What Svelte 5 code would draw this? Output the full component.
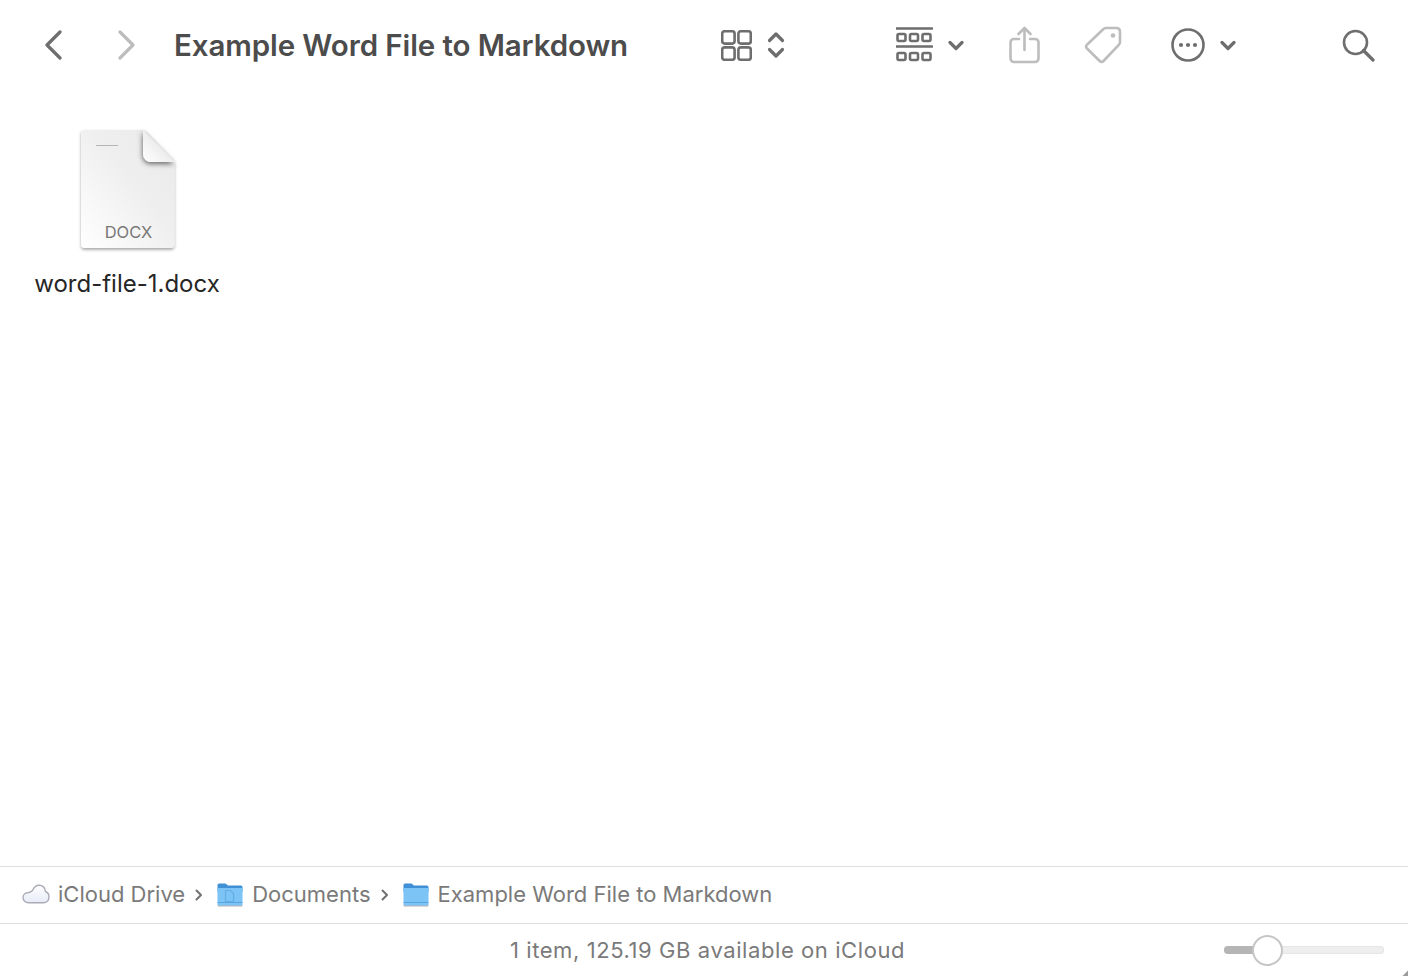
<script>
  const crumbs = [
    { label: 'iCloud Drive', kind: 'cloud' },
    { label: 'Documents', kind: 'docs' },
    { label: 'Example Word File to Markdown', kind: 'folder' }
  ];
</script>

<div class="window">
  <header class="toolbar">
    <svg class="back" width="18" height="30" viewBox="0 0 18 30"><path d="M16 2 3 15l13 13" class="ic" /></svg>
    <svg class="forward" width="18" height="30" viewBox="0 0 18 30"><path d="M2 2l13 13L2 28" class="ic dim" /></svg>
    <h1>Example Word File to Markdown</h1>
    <svg class="grid" width="31" height="31" viewBox="0 0 31 31">
      <rect x="1.2" y="1.2" width="12.4" height="12.4" rx="2.5" class="thin" />
      <rect x="17.4" y="1.2" width="12.4" height="12.4" rx="2.5" class="thin" />
      <rect x="1.2" y="17.4" width="12.4" height="12.4" rx="2.5" class="thin" />
      <rect x="17.4" y="17.4" width="12.4" height="12.4" rx="2.5" class="thin" />
    </svg>
    <svg class="updown" width="18" height="28" viewBox="0 0 18 28"><path d="M2.5 9.5 9 3l6.500 6.500M2.500 18.500 9 25l6.500-6.500" class="ic" /></svg>
    <svg class="gallery" width="37" height="36" viewBox="0 0 37 36">
      <path d="M0 1.500h36M0 19.500h36" class="thin" />
      <rect x="1.500" y="7" width="8" height="7" rx="1.500" class="thin" /><rect x="14" y="7" width="8" height="7" rx="1.500" class="thin" /><rect x="26.500" y="7" width="8" height="7" rx="1.500" class="thin" />
      <rect x="1.500" y="26" width="8" height="7" rx="1.500" class="thin" /><rect x="14" y="26" width="8" height="7" rx="1.500" class="thin" /><rect x="26.500" y="26" width="8" height="7" rx="1.500" class="thin" />
    </svg>
    <svg class="chev1" width="16" height="11" viewBox="0 0 16 11"><path d="M2 2.500 8 8.500l6-6" class="ic" /></svg>
    <svg class="share" width="31" height="38" viewBox="0 0 31 38">
      <path d="M10 13H5a3.500 3.500 0 0 0-3.500 3.500v16A3.500 3.500 0 0 0 5 36h21a3.500 3.500 0 0 0 3.500-3.500v-16A3.500 3.500 0 0 0 26 13h-5M15.500 24V2M9.500 8l6-6 6 6" class="thin dim" />
    </svg>
    <svg class="tag" width="39" height="40" viewBox="0 0 39 40">
      <path d="M22 3h10.500A3.500 3.500 0 0 1 36 6.500V17a4 4 0 0 1-1.200 2.800L19.500 36a2.700 2.700 0 0 1-3.800 0L3 23.500a2.700 2.700 0 0 1 0-3.800L19.200 4.200A4 4 0 0 1 22 3Z" class="thin dim" />
      <circle cx="29" cy="10.500" r="2.300" fill="#bdbdbd" />
    </svg>
    <svg class="more" width="34" height="34" viewBox="0 0 34 34">
      <circle cx="17" cy="17" r="15.500" class="thin" />
      <circle cx="10" cy="17" r="2.100" fill="#6e6e6e" /><circle cx="17" cy="17" r="2.100" fill="#6e6e6e" /><circle cx="24" cy="17" r="2.100" fill="#6e6e6e" />
    </svg>
    <svg class="chev2" width="16" height="11" viewBox="0 0 16 11"><path d="M2 2.500 8 8.500l6-6" class="ic" /></svg>
    <svg class="search" width="33" height="33" viewBox="0 0 33 33">
      <circle cx="13.500" cy="13.500" r="11.500" class="thin" />
      <path d="M21.500 21.500 31 31" class="ic" />
    </svg>
  </header>

  <main class="content">
    <figure class="file">
      <svg width="104" height="128" viewBox="0 0 104 128">
        <defs>
          <linearGradient id="page" x1="0" y1="1" x2="1" y2="0">
            <stop offset="0" stop-color="#ffffff" />
            <stop offset="0.55" stop-color="#efefef" />
            <stop offset="1" stop-color="#e9e9e9" />
          </linearGradient>
          <linearGradient id="fold" x1="0" y1="1" x2="1" y2="0">
            <stop offset="0" stop-color="#ffffff" />
            <stop offset="1" stop-color="#dcdcdc" />
          </linearGradient>
          <linearGradient id="cloud" x1="0" y1="0" x2="0" y2="1">
            <stop offset="0" stop-color="#ffffff" />
            <stop offset="1" stop-color="#e6ecf7" />
          </linearGradient>
          <filter id="sh" x="-10%" y="-10%" width="120%" height="120%">
            <feDropShadow dx="0" dy="1.800" stdDeviation="1.400" flood-color="#000" flood-opacity="0.35" />
          </filter>
          <filter id="fs" x="-30%" y="-30%" width="160%" height="160%">
            <feDropShadow dx="-0.500" dy="2" stdDeviation="2.500" flood-color="#000" flood-opacity="0.55" />
          </filter>
        </defs>
        <path d="M8 2h60l30.500 32v82a4 4 0 0 1-4 4H9a4 4 0 0 1-4-4V5a3 3 0 0 1 3-3Z" fill="url(#page)" filter="url(#sh)" />
        <path d="M67 2 98.500 34H75a8 8 0 0 1-8-8Z" fill="url(#fold)" filter="url(#fs)" />
        <path d="M20 17.500h22" stroke="#b4b4b4" stroke-width="1" />
        <text x="52.500" y="110" text-anchor="middle" class="ext">DOCX</text>
      </svg>
      <figcaption>word-file-1.docx</figcaption>
    </figure>
  </main>

  <nav class="pathbar">
    {#each crumbs as c, i}
      {#if c.kind === 'cloud'}
        <svg class="crumb-icon cloud" width="29" height="20" viewBox="0 0 29 20">
          <path d="M6.500 18.700C3.500 18.700 1 16.500 1 13.500 1 10.500 3.500 8.700 6 8.700 8 8.200 9.500 7.500 10.500 6.500 12 3 14.500 1.200 17 1.200 20.500 1.200 23 3.500 23.500 7.500 26 8.500 27 11 27 13 27 16.500 24.500 18.700 21.500 18.700Z" fill="url(#cloud)" stroke="#a9acb6" stroke-width="1.400" />
        </svg>
      {:else}
        <svg class="crumb-icon folder" width="26" height="26" viewBox="0 0 26 26">
          <rect x="0.500" y="24" width="25" height="1.500" rx="0.700" fill="#b5b5b5" />
          <path d="M0.500 4a1.500 1.500 0 0 1 1.500-1.500h6.500L11 4.500h13a1.500 1.500 0 0 1 1.500 1.500v5h-25Z" fill="#3f90d4" />
          <rect x="0.500" y="7" width="25" height="17.500" rx="1.200" fill="#7cc4f5" />
          <path d="M0.500 21.500h25" stroke="#5aa6df" stroke-width="1" />
          {#if c.kind === 'docs'}
            <path d="M8.500 9.500h5l3 3v8h-8Z" fill="none" stroke="#62ade6" stroke-width="1.200" />
          {/if}
        </svg>
      {/if}
      <span class="crumb">{c.label}</span>
      {#if i < crumbs.length - 1}
        <svg class="sep" width="8" height="12" viewBox="0 0 8 12"><path d="M1.500 1.500 6 6l-4.500 4.500" fill="none" stroke="#707070" stroke-width="2" stroke-linecap="round" stroke-linejoin="round" /></svg>
      {/if}
    {/each}
  </nav>

  <footer class="status">
    <span class="status-text">1 item, 125.19 GB available on iCloud</span>
    <div class="slider"><div class="fill"></div><div class="knob"></div></div>
    <svg class="corner" width="6" height="6" viewBox="0 0 6 6"><path d="M6 0.500 0.500 6H6Z" fill="#9c9c9c" /></svg>
  </footer>
</div>

<style>
  :global(body) { margin: 0; background: #fff; }
  .window {
    width: 1408px; height: 976px; display: flex; flex-direction: column;
    background: #fff; font-family: Inter, "Liberation Sans", sans-serif; overflow: hidden;
  }
  .toolbar { height: 90px; flex: none; display: flex; align-items: center; padding-left: 44px; }
  .toolbar svg { flex: none; }
  h1 { margin: 0 0 0 38px; width: 547px; flex: none; font-size: 29.5px; font-weight: 600; color: #4c4c4c; letter-spacing: -0.1px; white-space: nowrap; }
  .ic { fill: none; stroke: #6e6e6e; stroke-width: 3.2; stroke-linecap: round; stroke-linejoin: round; }
  .thin { fill: none; stroke: #6e6e6e; stroke-width: 2.6; stroke-linecap: round; stroke-linejoin: round; }
  .ic.dim, .thin.dim { stroke: #bdbdbd; }
  .forward { margin-left: 56px; }
  .updown { margin-left: 15px; }
  .gallery { margin-left: 111px; }
  .chev1 { margin-left: 15px; }
  .share { margin-left: 45px; }
  .tag { margin-left: 44px; }
  .more { margin-left: 48px; }
  .chev2 { margin-left: 15px; }
  .search { margin-left: 106px; }

  .content { flex: 1; padding: 38px 0 0 35px; }
  .file { margin: 0; width: 184px; display: flex; flex-direction: column; align-items: center; }
  .file svg { margin-left: 2px; display: block; }
  .ext { font: 400 16.500px Inter, "Liberation Sans", sans-serif; fill: #777; }
  figcaption { margin-top: 13px; font-size: 24px; line-height: 30px; color: #262626; white-space: nowrap; }

  .pathbar {
    flex: none; display: flex; align-items: center; padding: 0 0 2px 22px;
    border-top: 1.500px solid #dedede; border-bottom: 1.500px solid #dedede; box-sizing: border-box; height: 58px;
  }
  .crumb-icon { flex: none; }
  .crumb { margin-left: 7px; font-size: 22px; color: #7a7a7a; white-space: nowrap; }
  .folder + .crumb { margin-left: 9px; }
  .sep { margin: 2px 14px 0 10px; flex: none; }

  .status { height: 52px; flex: none; display: flex; align-items: center; justify-content: center; position: relative; }
  .status-text { margin-left: 7px; font-size: 22px; color: #7a7a7a; letter-spacing: 0.58px; white-space: nowrap; }
  .slider { position: absolute; left: 1224px; top: 22px; width: 160px; height: 8px; border-radius: 4px; background: #eeeeee; box-shadow: inset 0 0 0 1px #e6e6e6; }
  .fill { width: 43px; height: 100%; border-radius: 4px 0 0 4px; background: #b5b5b5; }
  .knob { position: absolute; left: 27.500px; top: -11px; width: 27px; height: 27px; border: 2px solid #c6c6c6; border-radius: 50%; background: #fff; }
  .corner { position: absolute; right: 0; bottom: 0; }
</style>
